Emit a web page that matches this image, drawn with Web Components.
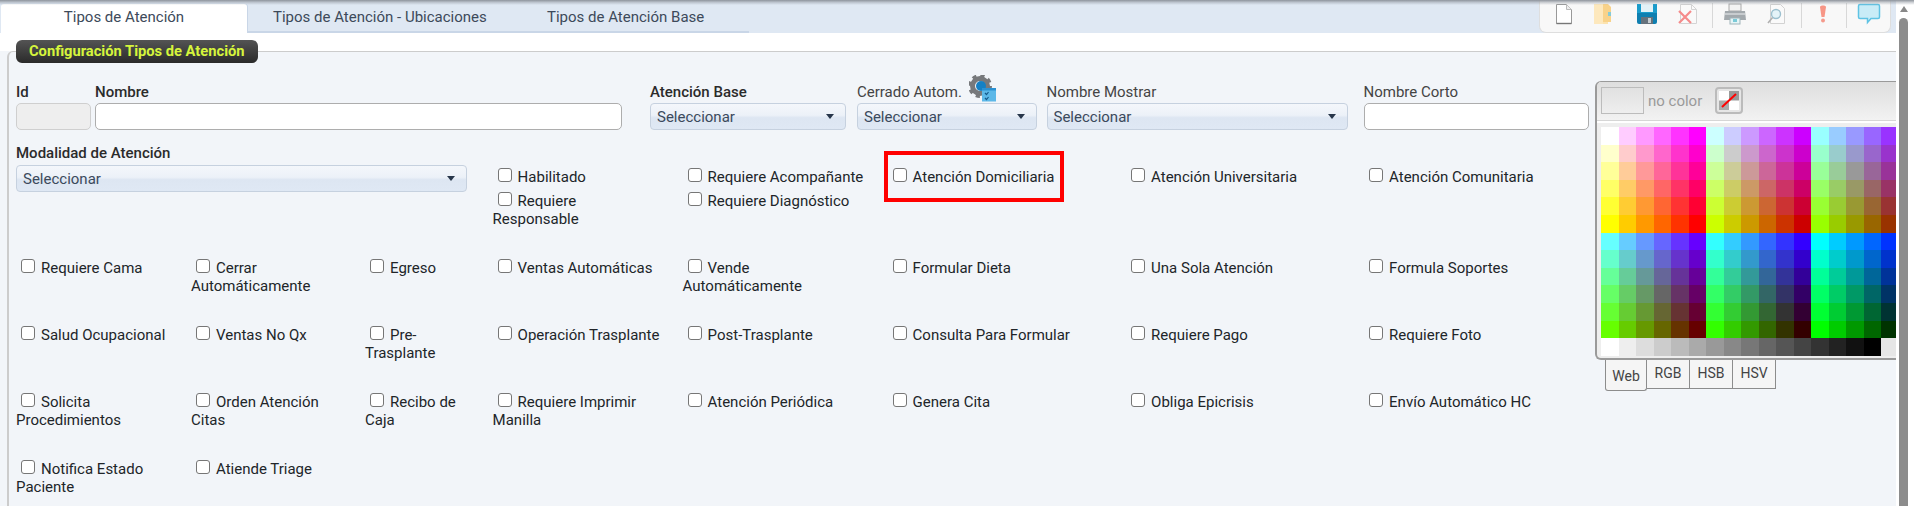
<!DOCTYPE html>
<html lang="es">
<head>
<meta charset="utf-8">
<title>Tipos de Atención</title>
<style>
html, body { margin: 0; height: 100%; overflow: hidden; background: #fff; }
body { font: 15px/18px Roboto, "Liberation Sans", sans-serif; color: #222; }
</style>
</head>
<body>
<app-shell>
  <tab-bar>
    <tab-item active style="--w:246px">Tipos de Atención</tab-item>
    <tab-item style="--w:270px;--pl:26px">Tipos de Atención - Ubicaciones</tab-item>
    <tab-item style="--w:232px;--pl:30px">Tipos de Atención Base</tab-item>
    <app-toolbar slot="tools"></app-toolbar>
  </tab-bar>
  <form-panel legend="Configuración Tipos de Atención">
    <div class="top" slot="top">
      <form-field label="Id" strong style="padding-right:4px"><text-box disabled></text-box></form-field>
      <form-field label="Nombre" strong style="padding-right:28px"><text-box></text-box></form-field>
      <form-field label="Atención Base" strong style="padding-right:11px"><drop-list></drop-list></form-field>
      <form-field label="Cerrado Autom." gear style="padding-right:9.5px"><drop-list></drop-list></form-field>
      <form-field label="Nombre Mostrar" style="padding-right:15.5px"><drop-list></drop-list></form-field>
      <form-field label="Nombre Corto"><text-box></text-box></form-field>
    </div>
    <check-grid slot="checks">
      <form-field label="Modalidad de Atención" strong class="wide"><drop-list style="width:451px"></drop-list></form-field>
      <div class="stack"><check-item>Habilitado</check-item><check-item>Requiere<br>Responsable</check-item></div>
      <div class="stack"><check-item>Requiere Acompañante</check-item><check-item>Requiere Diagnóstico</check-item></div>
      <div class="stack"><check-item>Atención Domiciliaria</check-item></div>
      <div class="stack"><check-item>Atención Universitaria</check-item></div>
      <div class="stack"><check-item>Atención Comunitaria</check-item></div>

      <check-item>Requiere Cama</check-item>
      <check-item>Cerrar<br>Automáticamente</check-item>
      <check-item>Egreso</check-item>
      <check-item>Ventas Automáticas</check-item>
      <check-item>Vende<br>Automáticamente</check-item>
      <check-item>Formular Dieta</check-item>
      <check-item>Una Sola Atención</check-item>
      <check-item>Formula Soportes</check-item>

      <check-item>Salud Ocupacional</check-item>
      <check-item>Ventas No Qx</check-item>
      <check-item>Pre-<br>Trasplante</check-item>
      <check-item>Operación Trasplante</check-item>
      <check-item>Post-Trasplante</check-item>
      <check-item>Consulta Para Formular</check-item>
      <check-item>Requiere Pago</check-item>
      <check-item>Requiere Foto</check-item>

      <check-item>Solicita<br>Procedimientos</check-item>
      <check-item>Orden Atención<br>Citas</check-item>
      <check-item>Recibo de<br>Caja</check-item>
      <check-item>Requiere Imprimir<br>Manilla</check-item>
      <check-item>Atención Periódica</check-item>
      <check-item>Genera Cita</check-item>
      <check-item>Obliga Epicrisis</check-item>
      <check-item>Envío Automático HC</check-item>

      <check-item>Notifica Estado<br>Paciente</check-item>
      <check-item>Atiende Triage</check-item>
    </check-grid>
    <color-picker slot="side"></color-picker>
  </form-panel>
  <page-scrollbar></page-scrollbar>
</app-shell>

<script>
class AppShell extends HTMLElement {
  connectedCallback() {
    this.attachShadow({ mode: 'open' }).innerHTML = `
    <style>
      :host { display: grid; grid-template-columns: 1896px 18px; grid-template-rows: 33px 473px; height: 506px; position: relative; overflow: hidden; }
      .shade { position: absolute; left: 0; right: 0; top: 0; height: 5px; background: linear-gradient(#8e949c, rgba(150,156,165,.45) 50%, rgba(200,205,215,0)); pointer-events: none; }
      .mark { position: absolute; left: 884px; top: 151px; width: 172px; height: 43px; border: 4px solid #f00; pointer-events: none; }
      ::slotted(page-scrollbar) { grid-column: 2; grid-row: 1 / 3; }
    </style>
    <slot></slot>
    <div class="shade"></div>
    <div class="mark"></div>`;
  }
}

class TabBar extends HTMLElement {
  connectedCallback() {
    this.attachShadow({ mode: 'open' }).innerHTML = `
    <style>
      :host { display: flex; justify-content: space-between; background: #dfe8f3; height: 33px; padding-left: 1px; padding-right: 5px; box-sizing: border-box; }
      .tabs { display: flex; }
    </style>
    <div class="tabs"><slot></slot></div>
    <slot name="tools"></slot>`;
  }
}

class TabItem extends HTMLElement {
  connectedCallback() {
    this.attachShadow({ mode: 'open' }).innerHTML = `
    <style>
      :host { display: block; box-sizing: border-box; width: var(--w); padding-left: var(--pl, 0); height: 33px; line-height: 35px; color: #3d4a5a; border-bottom: 2px solid #c9d6e7; white-space: nowrap; }
      :host([active]) { background: #fff; text-align: center; border: 0; border-radius: 3px 3px 0 0; margin-top: 4px; height: 29px; line-height: 27px; box-shadow: 1px 0 0 #c9d6e7; }
    </style>
    <slot></slot>`;
  }
}

class AppToolbar extends HTMLElement {
  connectedCallback() {
    this.attachShadow({ mode: 'open' }).innerHTML = `
    <style>
      :host { display: flex; box-sizing: border-box; width: 352px; height: 33px; background: #f8f8f8; border: 1px solid #dedede; border-top: 0; border-radius: 0 0 7px 7px; align-items: flex-start; padding-top: 3px; }
      svg { display: block; width: 24px; height: 22px; flex: none; filter: blur(.35px); }
      .sep { width: 1px; height: 25px; background: #d8d8d8; flex: none; }
    </style>
    <svg style="margin-left:12px" viewBox="0 0 24 22"><path d="M4.500 1.500h10l5 5v14h-15z" fill="#fff" stroke="#999"/><path d="M14.500 1.500v5h5" fill="#eee" stroke="#bbb"/><path d="M4.500 20.500h15" stroke="#777" stroke-width="1.400"/></svg>
    <svg style="margin-left:15px" viewBox="0 0 24 22"><path d="M3 1h14v20H3z" fill="#fce3ae"/><path d="M12 1h5l3 3v15h-8z" fill="#f8d28a"/><path d="M3 1h9v20H3z" fill="#fde8bd"/><rect x="17" y="9" width="3" height="4" fill="#86cbd6"/></svg>
    <svg style="margin-left:20px" viewBox="0 0 24 22"><rect x="2" y="1" width="20" height="20" rx="2" fill="#0f7fb0"/><rect x="2" y="1" width="20" height="9" fill="#1a9ccb"/><rect x="6" y="1" width="12" height="8" fill="#e3f2f7"/><rect x="6" y="14" width="12" height="7" fill="#66727c"/><rect x="13" y="15" width="3" height="5" fill="#c6ccd0"/></svg>
    <svg style="margin-left:15px" viewBox="0 0 24 22"><path d="M6.500 1.500h11l5 5v14h-16z" fill="#fafafa" stroke="#d4d4d4"/><path d="M17.500 1.500v5h5" fill="none" stroke="#d4d4d4"/><path d="M5 8l12 12M17 8L5 20" stroke="#f58b8b" stroke-width="2.200"/></svg>
    <div class="sep" style="margin-left:14px"></div>
    <svg style="margin-left:10px" viewBox="0 0 24 22"><rect x="6" y="1" width="12" height="7" fill="#f3f3f3" stroke="#aaa"/><path d="M2 8h20l1 9H1z" fill="#a3a9ad"/><rect x="2" y="10" width="20" height="2" fill="#c8cccf"/><rect x="7" y="15" width="10" height="6" fill="#e6f5f7" stroke="#9fb4b9"/><rect x="10" y="16" width="4" height="3" fill="#7bcbd8"/></svg>
    <svg style="margin-left:17px" viewBox="0 0 24 22"><path d="M6.500 1.500h10l4 4v15h-14z" fill="#fafafa" stroke="#d2d2d2"/><circle cx="12" cy="11" r="4.500" fill="#e4f3f8" stroke="#9cc0cf" stroke-width="1.400"/><path d="M8.500 14.500L4 20" stroke="#b0b0b0" stroke-width="1.600"/></svg>
    <div class="sep" style="margin-left:13px"></div>
    <svg style="margin-left:9px" viewBox="0 0 24 22"><path d="M9 4c0-2 6-2 6 0l-1.500 10h-3z" fill="#f79686"/><circle cx="12" cy="17.500" r="2" fill="#f49a8c"/></svg>
    <div class="sep" style="margin-left:11px"></div>
    <svg style="margin-left:10px" viewBox="0 0 24 22"><path d="M3 1.500h18c1 0 1.500.5 1.500 1.500v11c0 1-.5 1.500-1.500 1.500h-7l-3.500 4v-4H3c-1 0-1.500-.5-1.500-1.500V3c0-1 .5-1.500 1.500-1.500z" fill="#c9ecf7" stroke="#5fc3e4" stroke-width="1.500"/></svg>`;
  }
}

class FormPanel extends HTMLElement {
  connectedCallback() {
    this.attachShadow({ mode: 'open' }).innerHTML = `
    <style>
      :host { display: block; background: linear-gradient(#fff 18px, #f2f5f9 18px); padding: 18px 0 0 7px; box-sizing: border-box; height: 473px; overflow: hidden; }
      .box { position: relative; box-sizing: border-box; height: 100%; display: flex; background: #f2f5f9; border: 1px solid #ccc; border-width: 1px 0 0 2px; border-radius: 6px 0 0 0; }
      .legend { position: absolute; left: 7px; top: -12px; height: 23px; padding: 0 13px; border-radius: 6px; background: linear-gradient(#545454, #2a2a2a); color: #d6f53c; font-size: 14.700px; font-weight: 700; line-height: 23px; white-space: nowrap; }
      .form { width: 1586px; flex: none; box-sizing: border-box; padding: 31px 0 0 7px; }
      ::slotted(.top) { display: grid; grid-template-columns: 79px 555px 207px 189.500px 317px 225.500px; height: 47px; margin-bottom: 14px; }
      ::slotted(color-picker) { flex: none; }
    </style>
    <div class="box">
      <div class="legend">${this.getAttribute('legend')}</div>
      <div class="form"><slot name="top"></slot><slot name="checks"></slot></div>
      <slot name="side"></slot>
    </div>`;
  }
}

class FormField extends HTMLElement {
  connectedCallback() {
    const strong = this.hasAttribute('strong');
    const gear = this.hasAttribute('gear') ? `
      <svg class="gear" viewBox="0 0 28 27">
        <circle cx="11" cy="11" r="7.500" fill="none" stroke="#77797c" stroke-width="5"/>
        <circle cx="11" cy="11" r="10.500" fill="none" stroke="#77797c" stroke-width="3" stroke-dasharray="4.200 4.050"/>
        <circle cx="12" cy="11" r="5" fill="#1580c4"/>
        <rect x="13" y="13" width="14" height="13.500" fill="#5cb8e8"/>
        <rect x="13" y="13" width="14" height="2.500" fill="#2b91d2"/>
        <path d="M16 18l1.500 1.500 2-2.500M16 23l1.500 1.500 2-2.500" fill="none" stroke="#145a8c" stroke-width="1.200"/>
      </svg>` : '';
    this.attachShadow({ mode: 'open' }).innerHTML = `
    <style>
      :host { display: block; position: relative; box-sizing: border-box; }
      .lbl { height: 18px; line-height: 18px; margin-bottom: 2px; color: ${strong ? '#2b2b2b' : '#444'}; font-weight: ${strong ? 500 : 400}; white-space: nowrap; }
      .gear { position: absolute; left: 112px; top: -8px; width: 28px; height: 27px; filter: blur(.3px); }
      :host(.wide) { grid-column: 1 / 4; grid-row: 1; }
      :host(.wide) .lbl { margin-bottom: 3px; }
    </style>
    <div class="lbl">${this.getAttribute('label')}</div>${gear}
    <slot></slot>`;
  }
}

class TextBox extends HTMLElement {
  connectedCallback() {
    this.attachShadow({ mode: 'open' }).innerHTML = `
    <style>
      :host { display: block; box-sizing: border-box; height: 27px; background: #fff; border: 1px solid #adadad; border-radius: 5px; }
      :host([disabled]) { background: #eee; border-color: #cfcfcf; }
    </style>`;
  }
}

class DropList extends HTMLElement {
  connectedCallback() {
    this.attachShadow({ mode: 'open' }).innerHTML = `
    <style>
      :host { display: flex; align-items: center; justify-content: space-between; box-sizing: border-box; height: 27px; padding: 0 11px 0 6px; color: #3b4a5c; border: 1px solid #c6d1df; border-radius: 4px; background: linear-gradient(#f4f7fb 0, #ecf1f8 45%, #dde6f2 55%, #dfe8f4 100%); }
      i { width: 0; height: 0; border: 4.500px solid transparent; border-top: 5px solid #27364a; border-bottom: 0; }
    </style>
    <span>Seleccionar</span><i></i>`;
  }
}

class CheckGrid extends HTMLElement {
  connectedCallback() {
    this.attachShadow({ mode: 'open' }).innerHTML = `
    <style>
      :host { display: grid; grid-template-columns: 175px 174px 127.600px 190px 205px 238.500px 238px 222px; row-gap: 31px; }
      ::slotted(.stack) { display: flex; flex-direction: column; gap: 6px; padding-top: 24px; }
    </style>
    <slot></slot>`;
  }
}

class CheckItem extends HTMLElement {
  connectedCallback() {
    this.attachShadow({ mode: 'open' }).innerHTML = `
    <style>
      :host { display: block; line-height: 18px; color: #212529; white-space: nowrap; }
      i { display: inline-block; box-sizing: border-box; width: 14px; height: 14px; margin: 0 6px 0 5px; vertical-align: -1px; position: relative; top: -1px; background: #fff; border: 1px solid #767676; border-radius: 3px; }
    </style>
    <i></i><slot></slot>`;
  }
}

class ColorPicker extends HTMLElement {
  connectedCallback() {
    const hex = ['ff', 'cc', '99', '66', '33', '00'];
    const cells = [];
    for (const reds of [['ff', 'cc', '99'], ['66', '33', '00']]) {
      for (const b of hex) {
        for (const r of reds) {
          for (const g of hex) cells.push('#' + r + g + b);
        }
      }
    }
    for (const v of ['ff', 'ee', 'dd', 'cc', 'bb', 'aa', '99', '88', '77', '66', '55', '44', '33', '22', '11', '00', 'e6', 'e6']) cells.push('#' + v + v + v);
    this.attachShadow({ mode: 'open' }).innerHTML = `
    <style>
      :host { display: block; width: 309px; padding-top: 29px; color: #444; font-size: 14px; }
      .box { box-sizing: border-box; height: 279px; border: 1px solid #9a9a9a; border-width: 1px 0 2px 2px; border-radius: 6px 0 0 6px; background: #eee; overflow: hidden; }
      .head { display: flex; align-items: center; height: 38px; padding-left: 4px; background: linear-gradient(#dedede, #f2f2f2); border-bottom: 1px solid #d6d6d6; box-shadow: 0 2px 0 #fff; }
      .swatch { box-sizing: border-box; width: 43px; height: 27px; border: 1px solid #bcbcbc; margin-top: -2px; }
      .none { margin-left: 4px; width: 67px; color: #9a9a9a; font-size: 15px; }
      .btn { box-sizing: border-box; width: 28px; height: 27px; border: 2px solid #bbb; border-radius: 4px; background: #e6e6e6; padding: 2px; margin-top: -2px; }
      .btn svg { display: block; width: 20px; height: 19px; }
      .grid { display: grid; grid-template-columns: repeat(18, 17.500px); grid-auto-rows: 17.620px; margin: 6px 0 0 4px; }
      .tabs { display: flex; margin-left: 10px; }
      .t { box-sizing: border-box; width: 43px; height: 29px; line-height: 26px; text-align: center; background: #f5f5f5; border: 1px solid #8c8c8c; border-top: 0; border-left: 0; }
      .t:first-child { height: 31px; line-height: 32px; border-left: 1px solid #8c8c8c; border-radius: 0 0 3px 3px; width: 42px; }
    </style>
    <div class="box">
      <div class="head">
        <div class="swatch"></div><div class="none">no color</div>
        <div class="btn"><svg viewBox="0 0 20 19"><rect width="20" height="19" fill="#fff"/><rect x="10" width="10" height="9.500" fill="#999"/><rect y="9.500" width="10" height="9.500" fill="#aaa"/><path d="M3 16L17 3" stroke="#f00" stroke-width="2"/></svg></div>
      </div>
      <div class="grid">${cells.map(c => `<b style="background:${c}"></b>`).join('')}</div>
    </div>
    <div class="tabs"><div class="t">Web</div><div class="t">RGB</div><div class="t">HSB</div><div class="t">HSV</div></div>`;
  }
}

class PageScrollbar extends HTMLElement {
  connectedCallback() {
    this.attachShadow({ mode: 'open' }).innerHTML = `
    <style>
      :host { display: block; position: relative; background: #fff; height: 506px; }
      i { position: absolute; left: 4px; top: 6px; width: 0; height: 0; border: 4.500px solid transparent; border-bottom: 6px solid #888; border-top: 0; }
      b { position: absolute; left: 3px; top: 18px; bottom: 0; width: 9px; background: #8c8c8c; border-radius: 5px 5px 0 0; }
    </style>
    <i></i><b></b>`;
  }
}

customElements.define('app-shell', AppShell);
customElements.define('tab-bar', TabBar);
customElements.define('tab-item', TabItem);
customElements.define('app-toolbar', AppToolbar);
customElements.define('form-panel', FormPanel);
customElements.define('form-field', FormField);
customElements.define('text-box', TextBox);
customElements.define('drop-list', DropList);
customElements.define('check-grid', CheckGrid);
customElements.define('check-item', CheckItem);
customElements.define('color-picker', ColorPicker);
customElements.define('page-scrollbar', PageScrollbar);
</script>
</body>
</html>
